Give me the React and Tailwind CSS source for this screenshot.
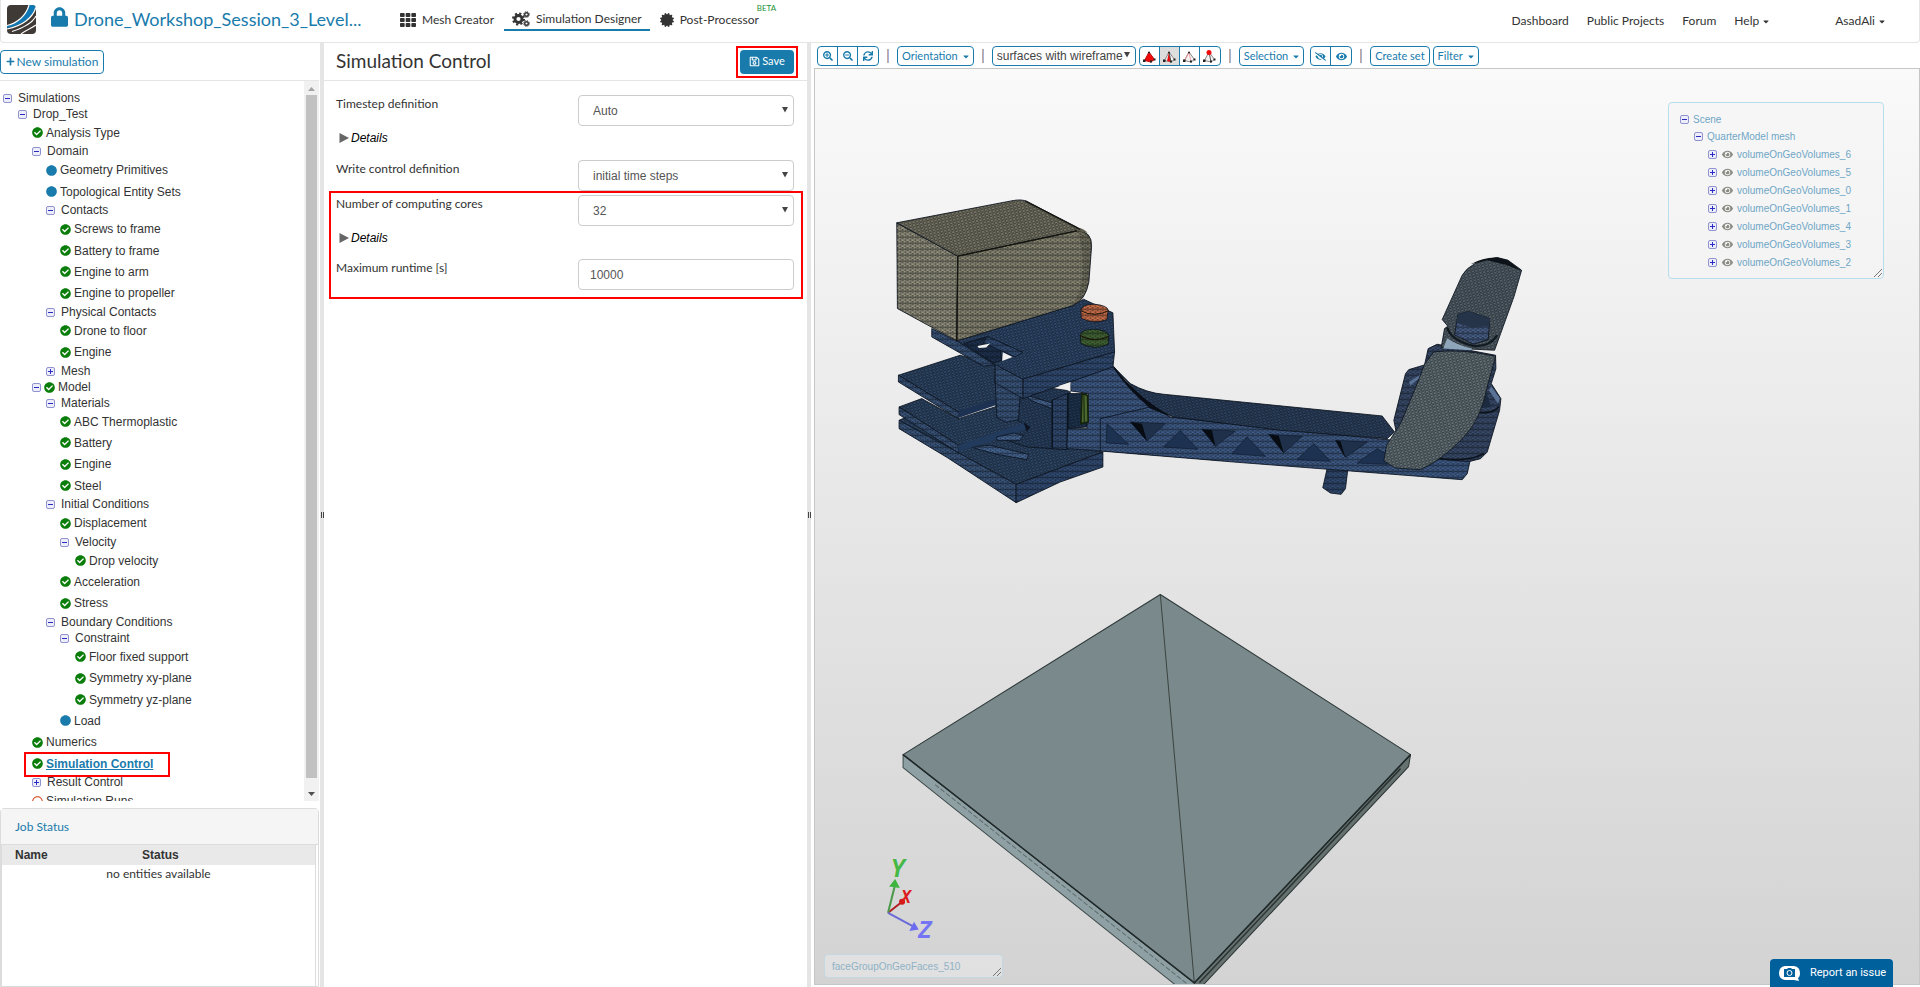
import React, { useState } from 'react';
import { FaLock, FaTh, FaCertificate, FaPlus, FaRegSave, FaCheckCircle, FaCircle, FaRegCircle, FaEye, FaEyeSlash, FaCaretDown, FaSearchPlus, FaSearchMinus, FaSync } from 'react-icons/fa';

// open = minus toggle, closed = plus toggle, ok / dot / ring = leaf with a status icon
const TREE = [
  { depth: 0, toggle: 'open', label: 'Simulations' },
  { depth: 1, toggle: 'open', label: 'Drop_Test' },
  { depth: 2, status: 'ok', label: 'Analysis Type' },
  { depth: 2, toggle: 'open', label: 'Domain' },
  { depth: 3, status: 'dot', label: 'Geometry Primitives' },
  { depth: 3, status: 'dot', label: 'Topological Entity Sets' },
  { depth: 3, toggle: 'open', label: 'Contacts' },
  { depth: 4, status: 'ok', label: 'Screws to frame' },
  { depth: 4, status: 'ok', label: 'Battery to frame' },
  { depth: 4, status: 'ok', label: 'Engine to arm' },
  { depth: 4, status: 'ok', label: 'Engine to propeller' },
  { depth: 3, toggle: 'open', label: 'Physical Contacts' },
  { depth: 4, status: 'ok', label: 'Drone to floor' },
  { depth: 4, status: 'ok', label: 'Engine' },
  { depth: 3, toggle: 'closed', label: 'Mesh' },
  { depth: 2, toggle: 'open', status: 'ok', label: 'Model' },
  { depth: 3, toggle: 'open', label: 'Materials' },
  { depth: 4, status: 'ok', label: 'ABC Thermoplastic' },
  { depth: 4, status: 'ok', label: 'Battery' },
  { depth: 4, status: 'ok', label: 'Engine' },
  { depth: 4, status: 'ok', label: 'Steel' },
  { depth: 3, toggle: 'open', label: 'Initial Conditions' },
  { depth: 4, status: 'ok', label: 'Displacement' },
  { depth: 4, toggle: 'open', label: 'Velocity' },
  { depth: 5, status: 'ok', label: 'Drop velocity' },
  { depth: 4, status: 'ok', label: 'Acceleration' },
  { depth: 4, status: 'ok', label: 'Stress' },
  { depth: 3, toggle: 'open', label: 'Boundary Conditions' },
  { depth: 4, toggle: 'open', label: 'Constraint' },
  { depth: 5, status: 'ok', label: 'Floor fixed support' },
  { depth: 5, status: 'ok', label: 'Symmetry xy-plane' },
  { depth: 5, status: 'ok', label: 'Symmetry yz-plane' },
  { depth: 4, status: 'dot', label: 'Load' },
  { depth: 2, status: 'ok', label: 'Numerics' },
  { depth: 2, status: 'ok', label: 'Simulation Control', active: true },
  { depth: 2, toggle: 'closed', label: 'Result Control' },
  { depth: 2, status: 'ring', label: 'Simulation Runs' },
];

const INDENT = ['pl-[3px]', 'pl-[18px]', 'pl-[32px]', 'pl-[46px]', 'pl-[60px]', 'pl-[75px]'];

const VOLUMES = [6, 5, 0, 1, 4, 3, 2];

const Toggle = ({ open }) => (
  <button type="button" aria-label={open ? 'Collapse' : 'Expand'} className="shrink-0">
    <svg width="9" height="9" viewBox="0 0 9 9" className="block">
      <rect x="0.5" y="0.5" width="8" height="8" rx="1.5" fill="#eeeefa" stroke="#8f93cf" />
      <path d={open ? 'M2 4.5h5' : 'M2 4.5h5M4.5 2v5'} stroke="#2a2ac8" />
    </svg>
  </button>
);

const StatusIcon = ({ status }) => {
  if (status === 'ok') return <FaCheckCircle className="shrink-0 size-[11px] text-[#0a7d0a]" />;
  if (status === 'dot') return <FaCircle className="shrink-0 size-[11px] text-[#197bac]" />;
  return <FaRegCircle className="shrink-0 size-[11px] text-[#d9481c]" />;
};

const TreeRow = ({ node, tall }) => {
  const height = !node.status || node.toggle ? 'h-4' : tall ? 'h-[22px]' : 'h-[21px]';
  const gap = node.toggle && !node.status ? 'gap-[6px]' : 'gap-[3px]';
  return (
    <li className={`relative flex shrink-0 items-center whitespace-nowrap ${height} ${gap} ${INDENT[node.depth]}`}>
      {node.toggle && <Toggle open={node.toggle === 'open'} />}
      {node.status && <StatusIcon status={node.status} />}
      {node.active ? (
        <a href="#control" className="font-bold text-[#197bac] underline">{node.label}</a>
      ) : (
        <a href="#node">{node.label}</a>
      )}
      {node.active && <span className="absolute -top-px left-6 z-10 h-[25px] w-[146px] border-2 border-[#f00]" />}
    </li>
  );
};

const SimulationTree = () => {
  let leaf = 0;
  return (
    <ul className="flex flex-1 flex-col overflow-hidden pt-[9px] text-[12px] text-[#333]">
      {TREE.map((node, i) => {
        const isLeaf = node.status && !node.toggle;
        const tall = isLeaf && [1, 3].includes(leaf % 5);
        if (isLeaf) leaf += 1;
        return <TreeRow key={i} node={node} tall={tall} />;
      })}
    </ul>
  );
};

const Scrollbar = () => (
  <div className="flex w-[15px] shrink-0 flex-col items-center bg-[#f1f1f1]">
    <svg width="15" height="14" viewBox="0 0 15 14"><path d="M4 10l3.5-4 3.5 4z" fill="#a3a3a3" /></svg>
    <div className="w-[11px] flex-1 bg-[#c1c1c1]" />
    <svg width="15" height="23" viewBox="0 0 15 23"><path d="M4 14l3.5 4 3.5-4z" fill="#505050" /></svg>
  </div>
);

const Logo = () => (
  <svg width="29" height="29" viewBox="0 0 29 29">
    <defs>
      <clipPath id="logo"><rect width="29" height="29" rx="4" /></clipPath>
    </defs>
    <g clipPath="url(#logo)" fill="none">
      <rect width="29" height="29" fill="#3f3a36" />
      <path d="M0 21C10 19 19 11 22 0h7c-2 12-13 20-29 23z" fill="#0f78b4" />
      <path d="M0 20.500C10 18 19 11 22 0" stroke="#fff" strokeWidth="1.200" />
      <path d="M0 24C15 21 26 13 29 2" stroke="#fff" strokeWidth="1.200" />
      <path d="M5 26.500C16 23 25 19 29 11" stroke="#fff" strokeWidth="1.200" />
      <path d="M14 29C19 25 25 23 29 20" stroke="#fff" strokeWidth="1.200" />
    </g>
  </svg>
);

// one large gear with two small ones to its right
const Gears = () => (
  <svg width="18" height="16" viewBox="0 0 18 16" fill="none" stroke="#333">
    <circle cx="6.500" cy="8" r="3.500" strokeWidth="2.800" />
    <circle cx="6.500" cy="8" r="5.500" strokeWidth="2" strokeDasharray="2.160 2.160" />
    <circle cx="14.500" cy="3.500" r="1.800" strokeWidth="1.400" />
    <circle cx="14.500" cy="3.500" r="2.900" strokeWidth="1" strokeDasharray="1.140 1.140" />
    <circle cx="14.500" cy="12.500" r="1.800" strokeWidth="1.400" />
    <circle cx="14.500" cy="12.500" r="2.900" strokeWidth="1" strokeDasharray="1.140 1.140" />
  </svg>
);

const Header = () => (
  <header className="flex h-[43px] shrink-0 items-center rounded-b border border-t-0 border-[#e5e5e5] pl-[6px] text-[12px] text-[#333]">
    <div className="-mt-1"><Logo /></div>
    <FaLock className="-mt-2 ml-[15px] h-5 w-[17px] text-[#197bac]" />
    <h1 className="-mt-1 ml-[6px] w-[326px] text-[18px] text-[#197bac]">Drone_Workshop_Session_3_Level...</h1>
    <nav className="-mt-1 flex h-6 items-center">
      <a href="#mesh" className="flex items-center gap-[6px] pt-px">
        <FaTh className="h-4 w-4" />
        Mesh Creator
      </a>
      <a href="#designer" className="ml-[10px] flex h-6 items-center gap-[6px] border-b-2 border-[#197bac] px-2 pt-[2px]">
        <Gears />
        Simulation Designer
      </a>
      <a href="#post" className="relative ml-[10px] flex items-center gap-[6px] pt-px">
        <FaCertificate className="h-[14px] w-[14px]" />
        Post-Processor
        <sup className="absolute -top-[6px] left-[97px] text-[8px] leading-none text-[#1a9433]">BETA</sup>
      </a>
    </nav>
    <nav className="ml-auto mr-[34px] flex items-center gap-[18px]">
      <a href="#dashboard">Dashboard</a>
      <a href="#projects">Public Projects</a>
      <a href="#forum">Forum</a>
      <button type="button" className="flex items-center gap-1">Help <FaCaretDown className="h-[9px] w-[6px]" /></button>
      <button type="button" className="ml-12 flex items-center gap-1">AsadAli <FaCaretDown className="h-[9px] w-[6px]" /></button>
    </nav>
  </header>
);

const Splitter = () => (
  <div className="flex w-1 shrink-0 items-center justify-center gap-px bg-[#e5e5e5]">
    <span className="h-[6px] w-px bg-[#444]" />
    <span className="h-[6px] w-px bg-[#444]" />
  </div>
);

const JobStatus = () => (
  <section className="mt-[7px] flex h-[179px] shrink-0 flex-col rounded-t border border-[#dcdcdc]">
    <h2 className="flex h-9 items-center border-b border-[#dcdcdc] bg-[#f5f5f5] pl-[14px] pt-px text-[12px] text-[#197bac]">Job Status</h2>
    <div className="mr-[2px] flex-1 border-x border-[#dcdcdc]">
      <table className="w-full text-[#333]">
        <thead>
          <tr className="h-5 bg-[#e9e9e9] text-left font-['Liberation_Sans',sans-serif] text-[12px] leading-5">
            <th className="w-[140px] pl-[13px]">Name</th>
            <th>Status</th>
          </tr>
        </thead>
        <tbody>
          <tr><td colSpan={2} className="text-center text-[12px] leading-[18px]">no entities available</td></tr>
        </tbody>
      </table>
    </div>
  </section>
);

const LeftPanel = () => (
  <aside className="flex w-80 shrink-0 flex-col pr-px">
    <div className="flex h-[38px] shrink-0 items-center border-b border-[#e5e5e5]">
      <button type="button" className="flex h-6 w-[104px] items-center justify-center gap-[2px] whitespace-nowrap rounded-sm border border-[#197bac] text-[12px] text-[#197bac]">
        <FaPlus className="size-[9px]" />
        New simulation
      </button>
    </div>
    <div className="flex min-h-0 flex-1 font-['Liberation_Sans',sans-serif]">
      <SimulationTree />
      <Scrollbar />
    </div>
    <JobStatus />
  </aside>
);

const SelectField = ({ id, label, options }) => (
  <div className="flex justify-between">
    <label htmlFor={id} className="leading-[18px]">{label}</label>
    <div className="relative w-[216px]">
      <select id={id} className="h-[31px] w-full appearance-none rounded border border-[#ccc] bg-white px-[14px] font-['Liberation_Sans',sans-serif] text-[12px] text-[#555]">
        {options.map((o) => <option key={o}>{o}</option>)}
      </select>
      <svg width="6" height="6" viewBox="0 0 6 6" className="pointer-events-none absolute right-[6px] top-3"><path d="M0 0h6L3 5.500z" fill="#444" /></svg>
    </div>
  </div>
);

const Details = () => (
  <details className="pl-[3px] font-['Liberation_Sans',sans-serif] text-[12px] italic leading-4 text-black">
    <summary className="flex list-none items-center gap-[2px]">
      <svg width="10" height="10" viewBox="0 0 10 10"><path d="M0.500 0L10 5 .5 10z" fill="#666" /></svg>
      Details
    </summary>
  </details>
);

const ControlPanel = () => {
  const [runtime, setRuntime] = useState('10000');

  return (
    <main className="w-[483px] shrink-0 text-[12px] text-[#333]">
      <div className="flex h-[38px] items-center justify-between border-b border-[#e5e5e5] pl-3 pr-[9px]">
        <h2 className="text-[19px]">Simulation Control</h2>
        <div className="border-2 border-[#f00] p-[2px]">
          <button type="button" className="flex h-6 w-[54px] items-center justify-center gap-[2px] rounded-sm bg-[#197bac] text-[11px] text-white">
            <FaRegSave className="size-[11px]" />
            Save
          </button>
        </div>
      </div>
      <form onSubmit={(e) => e.preventDefault()}>
        <div className="pl-3 pr-[13px] pt-[14px]">
          <SelectField id="timestep" label="Timestep definition" options={['Auto', 'Manual']} />
          <div className="pb-[14px] pt-1"><Details /></div>
          <SelectField id="write" label="Write control definition" options={['initial time steps', 'clock time']} />
        </div>
        <div className="ml-[5px] mr-1 h-[108px] border-2 border-[#f00] pl-[5px] pr-[7px] pt-[2px]">
          <SelectField id="cores" label="Number of computing cores" options={['32', '16', '8']} />
          <div className="pb-[13px] pt-1"><Details /></div>
          <div className="flex justify-between">
            <label htmlFor="runtime" className="leading-[18px]">Maximum runtime [s]</label>
            <input
              id="runtime"
              type="text"
              value={runtime}
              onChange={(e) => setRuntime(e.target.value)}
              className="h-[31px] w-[216px] rounded border border-[#ccc] px-[11px] font-['Liberation_Sans',sans-serif] text-[12px] text-[#555]"
            />
          </div>
        </div>
      </form>
    </main>
  );
};

const ToolButton = ({ children }) => (
  <button type="button" className="flex h-5 items-center gap-[5px] whitespace-nowrap rounded-sm border border-[#197bac] px-1 text-[11px] text-[#197bac]">
    {children}
  </button>
);

const Caret = () => <FaCaretDown className="h-[9px] w-[6px]" />;

const IconGroup = ({ items, active }) => (
  <div className="flex h-5 divide-x divide-[#197bac] overflow-hidden rounded-sm border border-[#197bac] text-[#197bac]">
    {items.map(({ label, icon }, i) => (
      <button key={label} type="button" aria-label={label} className={`flex w-5 items-center justify-center ${i === active ? 'bg-[#ddd]' : ''}`}>
        {icon}
      </button>
    ))}
  </div>
);

const Divider = () => <span className="mx-2 h-[14px] w-0.5 border-l border-r border-l-[#c9a79a] border-r-[#9fb4dc]" />;

// tetrahedron with the picked entity (volume, face, edge or node) in red
const Tetra = ({ kind }) => (
  <svg width="13" height="13" viewBox="0 0 13 13">
    <path d="M6 2L1.500 10.500 8 12l3.500-2.500z" fill={kind === 'volume' ? '#f00a0a' : '#f4f4f4'} stroke={kind === 'volume' ? '#c01010' : '#888'} />
    {kind === 'face' && <path d="M6 2L4 11l4 1z" fill="#f00a0a" />}
    {kind !== 'volume' && <path d="M6 2L8 12" stroke={kind === 'edge' ? '#f4a0a0' : '#555'} />}
    {kind === 'edge' && <path d="M6 2L1.500 10.500" stroke="#e88" />}
    <path d="M0 9.500h2.500V12H0zM7 10.500h2v2H7zM10.500 8.500h2v2h-2z" fill="#222" />
    <circle cx="6" cy="2.500" r={kind === 'node' ? 2.5 : 1} fill={kind === 'node' ? '#f00a0a' : '#222'} />
  </svg>
);

const Toolbar = () => (
  <div className="flex h-[25px] items-center pl-[6px] pt-px">
    <IconGroup
      items={[
        { label: 'Zoom in', icon: <FaSearchPlus className="size-[10px]" /> },
        { label: 'Zoom out', icon: <FaSearchMinus className="size-[10px]" /> },
        { label: 'Reset view', icon: <FaSync className="size-[10px]" /> },
      ]}
    />
    <Divider />
    <ToolButton>Orientation <Caret /></ToolButton>
    <Divider />
    <div className="relative flex">
      <select aria-label="Render mode" className="h-5 w-[144px] appearance-none rounded-sm border border-[#197bac] bg-white px-1 py-0 font-['Liberation_Sans',sans-serif] text-[12px] leading-[18px] text-[#444]">
        <option>surfaces with wireframe</option>
        <option>surfaces</option>
      </select>
      <svg width="6" height="6" viewBox="0 0 6 6" className="pointer-events-none absolute right-[6px] top-[6px]"><path d="M0 0h6L3 5.500z" fill="#444" /></svg>
    </div>
    <div className="ml-[3px]">
      <IconGroup
        active={1}
        items={[
          { label: 'Pick volume', icon: <Tetra kind="volume" /> },
          { label: 'Pick face', icon: <Tetra kind="face" /> },
          { label: 'Pick edge', icon: <Tetra kind="edge" /> },
          { label: 'Pick node', icon: <Tetra kind="node" /> },
        ]}
      />
    </div>
    <Divider />
    <ToolButton>Selection <Caret /></ToolButton>
    <div className="ml-[6px]">
      <IconGroup
        items={[
          { label: 'Hide selection', icon: <FaEyeSlash className="size-[11px]" /> },
          { label: 'Show all', icon: <FaEye className="size-[11px]" /> },
        ]}
      />
    </div>
    <Divider />
    <div className="flex gap-[3px]">
      <ToolButton>Create set</ToolButton>
      <ToolButton>Filter <Caret /></ToolButton>
    </div>
  </div>
);

// one surface: flat colour with the mesh lines laid over it
const Face = ({ d, fill, mesh = 'mesh' }) => (
  <>
    <path d={d} fill={fill} stroke="#0c1420" strokeWidth="2.500" strokeLinejoin="round" />
    <path d={d} fill={mesh === 'fine' ? 'url(#fine)' : 'url(#mesh)'} />
  </>
);

const Battery = () => (
  <g>
    <Face d="M50 128L233 228 230 482 52 385z" fill="#9a9782" />
    <Face d="M50 128L395 62Q425 56 440 64L592 142Q605 150 590 153L233 228z" fill="#7b7868" mesh="fine" />
    <Face d="M233 228L590 152Q636 152 634 200L626 305Q616 360 578 376L230 482z" fill="#918e78" />
    <path d="M590 150Q636 152 634 200L626 305Q616 360 578 376 608 330 608 260T590 150z" fill="#000" fillOpacity="0.150" />
    <path d="M592 142Q612 146 622 158L590 153z" fill="#5c5a4c" />
    <path d="M233 228L590 152M233 228L230 482M435 62L600 148" stroke="#15150f" strokeWidth="4" fill="none" />
  </g>
);

const Frame = () => (
  <g>
    {/* bottom plates */}
    <Face d="M57 720L75 712 235 806 445 745 560 800 668 815 408 912z" fill="#2f486a" mesh="fine" />
    <Face d="M57 720L408 912 408 967 202 832 57 745z" fill="#3d5a82" />
    <Face d="M408 912L668 815 668 860 540 905 408 967z" fill="#34507a" />
    <Face d="M345 600L570 632 562 808 440 800 350 770z" fill="#2a4264" mesh="fine" />
    <Face d="M270 800L330 795 445 822 440 838 350 822z" fill="#4a6b9a" />
    <Face d="M57 680L125 655 235 715 350 678 435 735 430 748 235 795z" fill="#2f486a" mesh="fine" />
    <Face d="M57 680L235 795 235 818 57 703z" fill="#3d5a82" />
    <path d="M235 795L430 728 445 745 235 815z" fill="#223a5c" />
    <Face d="M350 770L400 758 430 765 420 780 350 780z" fill="#4a6b9a" />
    <path d="M430 725L450 740 440 755z" fill="#0c1420" />
    <Face d="M55 585L240 525 345 555 345 610 420 640 235 695z" fill="#2f486a" mesh="fine" />
    <Face d="M55 585L235 695 235 715 55 605z" fill="#3d5a82" />
    <path d="M235 692L400 640 390 660 235 713z" fill="#1d3252" />
    {/* centre columns */}
    <Face d="M345 600L420 640 415 718 378 726 350 712z" fill="#3d5a82" />
    <Face d="M515 660L562 640 560 808 515 805z" fill="#334e76" />
    <Face d="M440 645L515 668 515 685 450 660z" fill="#4a6b9a" />
    <path d="M517 660V805M562 640V805" stroke="#0c1420" strokeWidth="3" />
    <Face d="M564 640L620 640 620 740 564 745z" fill="#1f3553" mesh="fine" />
    {/* arm bracket */}
    <Face d="M570 604L700 558Q760 645 870 712L1020 720 1020 840 675 812 560 805 562 745 620 745 625 640 572 632z" fill="#42608e" />
    <path d="M605 640L622 645 624 725 602 730z" fill="#4b692f" stroke="#14210c" strokeWidth="5" />
    <path d="M611 645L612 725" stroke="#14210c" strokeWidth="3" />
    {/* top plate */}
    <Face d="M155 445L230 482 345 540 345 553 310 558 155 470z" fill="#3d5a82" />
    <Face d="M230 482L578 376 610 357 698 398 703 515 428 597 335 548z" fill="#30496e" mesh="fine" />
    <Face d="M428 597L703 515 698 560 570 605 428 655z" fill="#34507a" />
    <Face d="M345 553L428 597 428 655 345 608z" fill="#3d5a82" />
    <Face d="M250 490L320 470 360 505 365 540 340 548z" fill="#1f3352" />
    <Face d="M320 468L428 516 405 530 310 488z" fill="#36527c" />
    <path d="M292 497L330 490 318 502 296 503zM368 516L397 530 366 542zM535 617L571 605 570 634z" fill="#f0f0f0" />
    {/* screws */}
    <Face d="M602 390Q605 372 642 372 682 376 684 390L680 418Q642 434 603 414z" fill="#d9754c" />
    <Face d="M600 462Q608 446 645 447 684 452 686 466L684 492Q645 512 602 490z" fill="#456a34" />
    <path d="M602 392Q642 412 684 392M600 466Q645 490 686 468" stroke="#1a1408" strokeWidth="3" fill="none" />
  </g>
);

const Arm = () => (
  <g>
    <Face d="M680 685L742 688 735 745 722 762 690 758 667 742z" fill="#334e76" />
    <Face d="M0 535L150 500 210 530 340 545 880 600 1110 655 1100 700 1085 718 750 692 400 665 0 632z" fill="#42608e" />
    <Face d="M40 380L90 430Q140 458 190 462L845 527 882 575 860 595 540 570 220 530 150 500z" fill="#2d4262" mesh="fine" />
    <path d="M40 380Q110 470 215 530L150 505Q80 445 40 385z" fill="#080d16" />
    <path
      d="M20 550L85 612 18 608zM240 570L292 627 190 620zM440 590L495 648 395 640zM640 610L690 663 590 658zM830 625L858 640 860 672 770 668z"
      fill="#1d3150"
      stroke="#101c30"
      strokeWidth="2"
    />
    <path d="M90 545L195 550 140 602zM305 567L405 572 345 618zM505 582L605 588 550 638zM705 600L800 605 735 652z" fill="#1f304a" stroke="#101c30" strokeWidth="2" />
    <path d="M90 545L125 550 140 602zM305 567L335 570 345 618zM505 582L535 586 550 638zM705 600L720 603 735 652z" fill="#070b12" />
    {/* motor */}
    <Face d="M880 540L915 400 925 388 972 374 983 325 1010 312 1185 345 1186 385 1172 430 1201 475 1197 510 1160 635 1140 655 1105 664 1000 655 890 590z" fill="#3c4f70" />
    <path d="M925 425L970 397 965 408 930 435zM1172 438L1198 475 1192 490 1165 450z" fill="#5a7296" />
    <path d="M1155 450L1172 500 1135 505z" fill="#1c2a40" />
    <path d="M1130 515Q1170 525 1195 500M990 650Q1090 670 1150 640" stroke="#0c131d" strokeWidth="5" fill="none" />
    {/* propeller */}
    <Face d="M1025 238L1085 105Q1110 62 1190 52L1222 60 1263 90 1240 170 1182 330 1022 322 1032 265 1042 258z" fill="#56626c" mesh="fine" />
    <path d="M1110 72Q1150 50 1190 52L1222 60 1263 92 1215 74 1160 60z" fill="#0d1319" />
    <path d="M1040 294Q1070 315 1115 325L1110 330 1028 325z" fill="#8fa6ba" />
    <path d="M1040 262Q1050 300 1120 318 1170 318 1190 285" fill="none" stroke="#121a22" strokeWidth="7" />
    <Face d="M1072 222L1105 214 1168 235 1163 298 1118 312 1062 284z" fill="#4b638d" />
    <path d="M1072 222L1105 214 1168 235 1166 258 1115 262 1068 248z" fill="#26344a" />
    <Face d="M1000 335Q1080 325 1185 348L1160 440Q1140 540 1090 590 1030 655 960 688L885 683 850 662 858 615 900 550 950 430 972 372z" fill="#66737a" mesh="fine" />
  </g>
);

const Floor = () => (
  <g strokeLinejoin="round">
    <path d="M903 754L903 767 1175 984 1194 984 1194 982z" fill="#8fa0a4" stroke="#3f4a4a" />
    <path d="M1410 754L1408 766 1203 984 1194 984 1194 982z" fill="#66726f" stroke="#2c3434" />
    <path d="M1160 594L1410 754 1194 982 903 754z" fill="#7a898b" stroke="#2e3838" />
    <path d="M1160 594L1194 982" stroke="#3b4540" />
    <path d="M903 754L1194 982 1410 754" fill="none" stroke="#20292a" strokeWidth="1.500" />
    <path d="M935 784L1188 984" stroke="#5f6c6c" strokeDasharray="5 2" />
    <path d="M1400 768L1199 982" stroke="#2c3434" strokeWidth="1.500" />
  </g>
);

const Axes = () => (
  <g strokeWidth="2" fontFamily="DejaVu Sans Mono, monospace" fontWeight="bold" fontStyle="italic">
    <path d="M888 912L902 901" stroke="#b02020" />
    <circle cx="902" cy="901" r="3" fill="#d01818" />
    <path d="M888 912L895 884" stroke="#4a9a4a" />
    <path d="M895 880L891 885 898 886z" fill="#3fb53f" stroke="#3fb53f" />
    <path d="M888 912L914 926" stroke="#6a6ad8" />
    <path d="M917 928L911 929 914 923z" fill="#6c6cf0" stroke="#6c6cf0" />
    <text x="891" y="876" fontSize="24" fill="#45b845">Y</text>
    <text x="901" y="902" fontSize="17" fill="#dd1c1c">X</text>
    <text x="918" y="937" fontSize="23" fill="#7474f4">Z</text>
  </g>
);

const Model = () => (
  <svg className="absolute inset-0 h-full w-full" viewBox="815 69 1103 914" preserveAspectRatio="xMinYMin meet" role="img" aria-label="Drone mesh">
    <defs>
      <pattern id="mesh" width="15" height="18" patternUnits="userSpaceOnUse">
        <path d="M0 0L15 9 0 18M0 9L15 0M0 9L15 18M0 0V18M7.500 4V14M0 9H15" stroke="#05080c" strokeOpacity="0.650" strokeWidth="1.500" fill="none" />
      </pattern>
      <pattern id="fine" width="11" height="9" patternUnits="userSpaceOnUse" patternTransform="rotate(-12)">
        <path d="M0 0L11 9M0 9L11 0M0 4.500H11M0 0V9" stroke="#05080c" strokeOpacity="0.550" strokeWidth="1.500" fill="none" />
      </pattern>
    </defs>
    <g transform="translate(880 180) scale(0.3333)">
      <Frame />
      <Battery />
    </g>
    <g transform="translate(1100 240) scale(0.3333)">
      <Arm />
    </g>
    <Floor />
    <Axes />
  </svg>
);

const Grip = () => (
  <svg width="8" height="8" viewBox="0 0 8 8" className="absolute bottom-px right-px"><path d="M0 8L8 0M4 8L8 4" stroke="#777" /></svg>
);

const SceneTree = () => (
  <div className="absolute right-[35px] top-[33px] h-[177px] w-[216px] rounded border border-[#b5dfea] bg-[#f5f5f5]/60 pt-[7px] font-['Liberation_Sans',sans-serif] text-[10px] text-[#6fa6c6]">
    <ul>
      <li className="flex h-[18px] items-center gap-1 pl-[11px]"><Toggle open /> <a href="#scene">Scene</a></li>
      <li className="flex h-[17px] items-center gap-1 pl-[25px]"><Toggle open /> <a href="#mesh">QuarterModel mesh</a></li>
      {VOLUMES.map((n) => (
        <li key={n} className="flex h-[18px] items-center pl-[39px]">
          <Toggle />
          <FaEye className="ml-[5px] mr-1 size-[11px] text-[#8a8a82]" />
          <a href="#volume">volumeOnGeoVolumes_{n}</a>
        </li>
      ))}
    </ul>
    <Grip />
  </div>
);

const Viewer = () => (
  <section className="flex min-w-0 flex-1 flex-col pb-[2px]">
    <Toolbar />
    <div className="relative ml-[3px] min-h-0 flex-1 overflow-hidden border border-[#c6c6c6] bg-linear-to-b from-[#fafafa] to-[#d3d3d3]">
      <Model />
      <SceneTree />
      <div className="absolute bottom-[6px] left-[9px] flex h-6 w-[179px] items-center rounded border border-[#c3d8e0] bg-[#e4e4e4]/80 pl-[7px] font-['Liberation_Sans',sans-serif] text-[10px] text-[#8fb2c6]">
        faceGroupOnGeoFaces_510
        <Grip />
      </div>
    </div>
  </section>
);

const App = () => {
  return (
    <div className="flex h-screen flex-col overflow-hidden bg-white font-['Lato',sans-serif]">
      <Header />
      <div className="flex min-h-0 flex-1">
        <LeftPanel />
        <Splitter />
        <ControlPanel />
        <Splitter />
        <Viewer />
      </div>
      <button type="button" className="fixed bottom-0 right-[27px] flex h-7 w-[123px] items-center gap-[10px] rounded-t-sm bg-[#00609c] pl-[9px] font-['Roboto',sans-serif] text-[11px] text-white">
        <svg width="21" height="15" viewBox="0 0 21 15">
          <path d="M6 0h9q6 1 6 7 0 4-2 5l1 3-5-1H6Q0 13 0 7 0 1 6 0z" fill="#fff" />
          <path d="M5 3h3l1-1h3l1 1h3v8H5z" fill="#00609c" />
          <circle cx="10.500" cy="7" r="2.500" fill="#00609c" stroke="#fff" />
        </svg>
        Report an issue
      </button>
    </div>
  );
};

export default App;
